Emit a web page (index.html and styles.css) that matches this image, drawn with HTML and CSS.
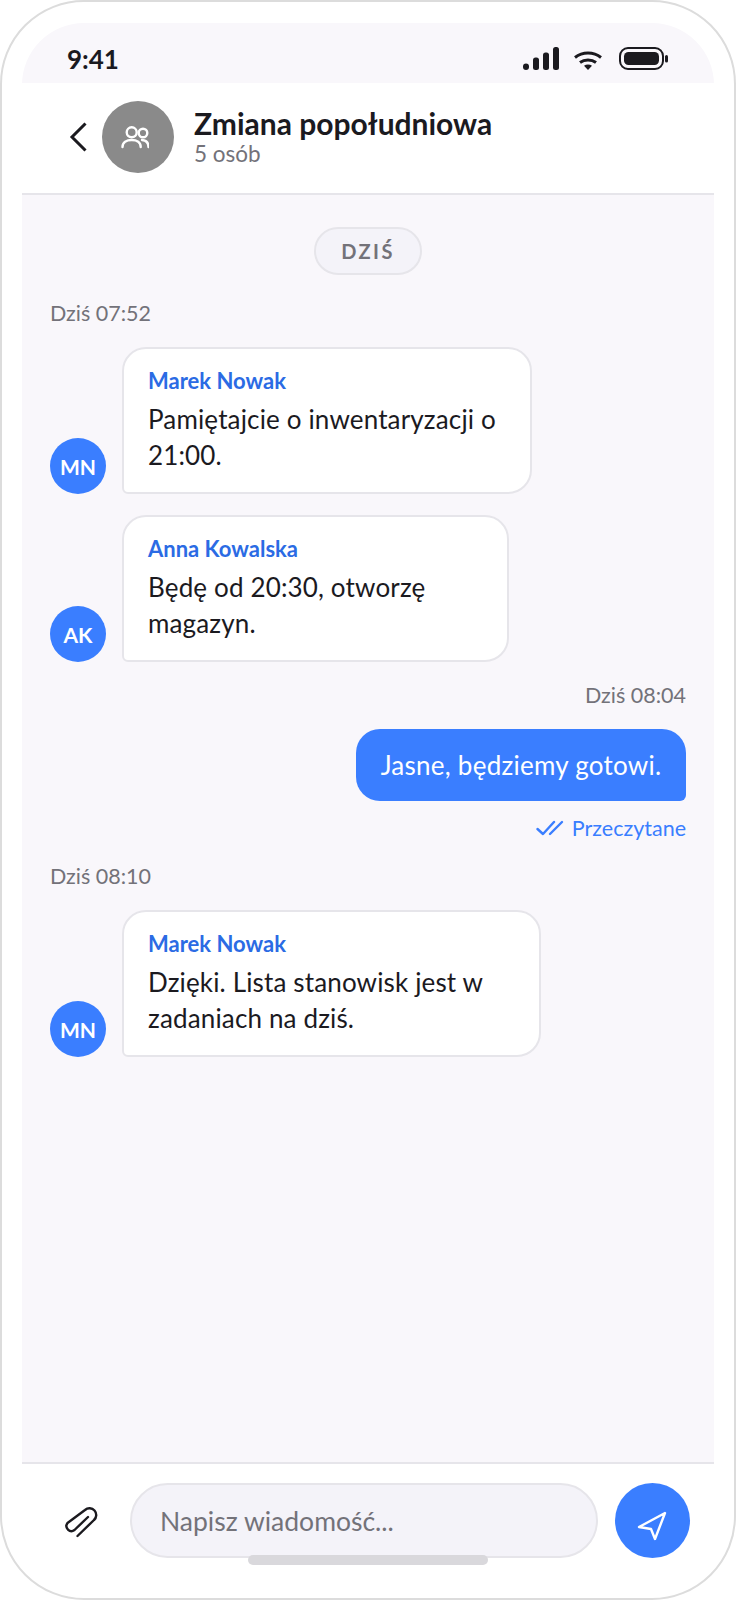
FILE: index.html
```html
<!DOCTYPE html>
<html lang="pl">
<head>
    <meta charset="UTF-8">
    <meta name="viewport" content="width=device-width, initial-scale=1.0">
    <title>Zmiana popołudniowa</title>
    <link rel="stylesheet" href="styles.css">
</head>
<body>
    <div class="phone">
        <div class="screen">
            <div class="status-bar">
                <span class="clock">9:41</span>
                <div class="status-icons">
                    <svg width="36" height="23" viewBox="0 0 36 23" fill="#1b1a1f">
                        <rect x="0" y="16.500" width="6" height="6.500" rx="3"/>
                        <rect x="10" y="10.500" width="6" height="12.500" rx="2.500"/>
                        <rect x="20" y="5.500" width="6" height="17.500" rx="2.500"/>
                        <rect x="30" y="0" width="6" height="23" rx="2.500"/>
                    </svg>
                    <svg class="wifi" width="28" height="19" viewBox="0 0 28 19" fill="none" stroke="#1b1a1f" stroke-width="3">
                        <path d="M1 6.500c7.500-6 18.500-6 26 0"/>
                        <path d="M6 11.500c4.500-3.500 11.500-3.500 16 0"/>
                        <path d="M10 14.800 14 19l4-4.200c-2.400-1.700-5.600-1.700-8 0z" fill="#1b1a1f" stroke="none"/>
                    </svg>
                    <svg width="49" height="23" viewBox="0 0 49 23" fill="none">
                        <rect x="1" y="1" width="43" height="21" rx="8" stroke="#1b1a1f" stroke-width="2"/>
                        <rect x="5" y="5" width="35" height="13" rx="4.500" fill="#1b1a1f"/>
                        <rect x="46" y="8" width="3" height="7.500" rx="1.500" fill="#1b1a1f"/>
                    </svg>
                </div>
            </div>

            <div class="chat-header">
                <svg class="back" width="20" height="32" viewBox="0 0 20 32" fill="none" stroke="#1b1a1f" stroke-width="3">
                    <path d="M16.500 2.500 3 16l13.500 13.500"/>
                </svg>
                <div class="group-avatar">
                    <svg class="group-icon" width="28" height="24" viewBox="12 11 28 24" fill="none" stroke="#fff" stroke-width="2.400" stroke-linecap="round">
                        <circle cx="22.700" cy="18.300" r="5"/>
                        <circle cx="34" cy="19" r="4.300"/>
                        <path d="M13.500 33c0-4.500 4-7 9.200-7s9 2.500 9 7"/>
                        <path d="M33 26c4 .3 6.500 3 6.500 7"/>
                    </svg>
                </div>
                <div class="group-info">
                    <h1>Zmiana popołudniowa</h1>
                    <p>5 osób</p>
                </div>
            </div>

            <div class="messages">
                <div class="day-pill">DZIŚ</div>

                <div class="time">Dziś 07:52</div>
                <div class="msg-row">
                    <div class="avatar">MN</div>
                    <div class="bubble bubble-m">
                        <div class="author">Marek Nowak</div>
                        <div class="text">Pamiętajcie o inwentaryzacji o<br>21:00.</div>
                    </div>
                </div>
                <div class="msg-row">
                    <div class="avatar">AK</div>
                    <div class="bubble bubble-s">
                        <div class="author">Anna Kowalska</div>
                        <div class="text">Będę od 20:30, otworzę<br>magazyn.</div>
                    </div>
                </div>

                <div class="time mine">Dziś 08:04</div>
                <div class="bubble-mine">Jasne, będziemy gotowi.</div>
                <div class="read">
                    <svg width="28" height="16" viewBox="0 0 28 16" fill="none" stroke="#3a7eff" stroke-width="2.400" stroke-linecap="round" stroke-linejoin="round">
                        <path d="M1.500 9 7 14 18 2"/>
                        <path d="M14 14 26 2"/>
                    </svg>
                    <span>Przeczytane</span>
                </div>

                <div class="time">Dziś 08:10</div>
                <div class="msg-row">
                    <div class="avatar">MN</div>
                    <div class="bubble bubble-l">
                        <div class="author">Marek Nowak</div>
                        <div class="text">Dzięki. Lista stanowisk jest w<br>zadaniach na dziś.</div>
                    </div>
                </div>
            </div>

            <div class="composer">
                <svg class="clip" width="50" height="50" viewBox="0 0 50 50" fill="none" stroke="#1b1a1f" stroke-width="2.400" stroke-linecap="round" stroke-linejoin="round">
                    <path d="M22.500 41 39 25a6.300 6.300 0 0 0-9-10L12.500 28a5 5 0 0 0 7 7L33 22"/>
                </svg>
                <div class="input">Napisz wiadomość...</div>
                <div class="send">
                    <svg class="send-icon" width="55" height="55" viewBox="0 0 55 55" fill="none" stroke="#fff" stroke-width="2.400" stroke-linejoin="round">
                        <polygon points="40,17 14,31 26,33 30,43"/>
                    </svg>
                </div>
            </div>
            <div class="home-bar"></div>
        </div>
    </div>
</body>
</html>
```

FILE: styles.css
```css
* {
    box-sizing: border-box;
}
body {
    font-family: Lato, "Noto Sans", sans-serif;
    margin: 0;
    padding: 0;
    background: #fff;
    color: #1b1a1f;
}
.phone {
    width: 736px;
    height: 1600px;
    padding: 21px 20px 0;
    background: #fff;
    border: 2px solid #dcdcdc;
    border-radius: 84px;
}
.screen {
    position: relative;
    height: 100%;
    display: flex;
    flex-direction: column;
    border-radius: 62px 62px 0 0;
    overflow: hidden;
}
.status-bar {
    flex: none;
    height: 60px;
    padding: 12px 46px 0 45px;
    display: flex;
    align-items: center;
    justify-content: space-between;
    background: #f9f7fb;
}
.clock {
    font-size: 26px;
    font-weight: 700;
}
.status-icons {
    display: flex;
    align-items: flex-end;
    gap: 15px;
    margin-bottom: 2px;
}
.wifi {
    margin-right: 2px;
}
.chat-header {
    flex: none;
    height: 112px;
    padding: 0 0 2px 47px;
    display: flex;
    align-items: center;
    background: #fff;
    border-bottom: 2px solid #e6e5ea;
}
.back {
    flex: none;
    margin-right: 13px;
}
.group-avatar {
    flex: none;
    width: 72px;
    height: 72px;
    margin-right: 20px;
    border-radius: 50%;
    background: #8a8a8a;
    display: flex;
    align-items: center;
    justify-content: center;
}
.group-icon {
    margin-right: 6px;
}
.group-info h1 {
    margin: 0;
    font-size: 30px;
    font-weight: 700;
    line-height: 34px;
}
.group-info p {
    margin: 0;
    font-size: 22.500px;
    line-height: 28px;
    color: #737279;
}
.messages {
    flex: 1;
    padding: 32px 28px 0;
    display: flex;
    flex-direction: column;
    background: #f9f7fb;
}
.day-pill {
    align-self: center;
    width: 108px;
    height: 48px;
    display: flex;
    align-items: center;
    justify-content: center;
    background: #f4f3f9;
    border: 2px solid #e6e5ea;
    border-radius: 24px;
    font-size: 20px;
    font-weight: 700;
    letter-spacing: 2.400px;
    color: #737279;
}
.time {
    margin-top: 25px;
    font-size: 21.500px;
    line-height: 26px;
    color: #737279;
}
.time.mine {
    align-self: flex-end;
    margin-top: 20px;
}
.msg-row {
    margin-top: 21px;
    display: flex;
    align-items: flex-end;
    gap: 16px;
}
.time + .msg-row {
    margin-top: 21px;
}
.avatar {
    flex: none;
    width: 56px;
    height: 56px;
    border-radius: 50%;
    background: #3a7eff;
    color: #fff;
    font-size: 21px;
    font-weight: 700;
    display: flex;
    align-items: center;
    justify-content: center;
}
.bubble {
    padding: 17px 24px 19px;
    background: #fff;
    border: 2px solid #e6e5ea;
    border-radius: 24px 24px 24px 6px;
}
.bubble-s {
    width: 387px;
}
.bubble-m {
    width: 410px;
}
.bubble-l {
    width: 419px;
}
.author {
    font-size: 22px;
    font-weight: 700;
    line-height: 30px;
    color: #2b6be4;
}
.text {
    margin-top: 5px;
    font-size: 26px;
    letter-spacing: .15px;
    line-height: 36px;
}
.bubble-mine {
    align-self: flex-end;
    margin-top: 21px;
    width: 330px;
    height: 72px;
    display: flex;
    align-items: center;
    justify-content: center;
    background: #3a7eff;
    color: #fff;
    font-size: 26px;
    letter-spacing: .25px;
    border-radius: 24px 24px 6px 24px;
}
.read {
    align-self: flex-end;
    margin-top: 14px;
    display: flex;
    align-items: center;
    gap: 8px;
    font-size: 21.500px;
    line-height: 26px;
    color: #3a7eff;
}
.read + .time {
    margin-top: 22px;
}
.composer {
    flex: none;
    height: 136px;
    padding: 19px 24px 0 33px;
    display: flex;
    align-items: flex-start;
    border-top: 2px solid #e6e5ea;
}
.clip {
    flex: none;
    margin: 12px 25px 0 0;
}
.input {
    flex: 1;
    height: 75px;
    padding: 0 28px;
    display: flex;
    align-items: center;
    background: #f4f3f9;
    border: 2px solid #e6e5ea;
    border-radius: 38px;
    font-size: 26.500px;
    color: #737279;
}
.send {
    flex: none;
    width: 75px;
    height: 75px;
    margin-left: 17px;
    border-radius: 50%;
    background: #3a7eff;
    display: flex;
    align-items: center;
    justify-content: center;
}
.send-icon {
    margin-top: 6px;
}
.home-bar {
    position: absolute;
    left: 226px;
    bottom: 33px;
    width: 240px;
    height: 10px;
    border-radius: 5px;
    background: #d9d8dc;
}
```
